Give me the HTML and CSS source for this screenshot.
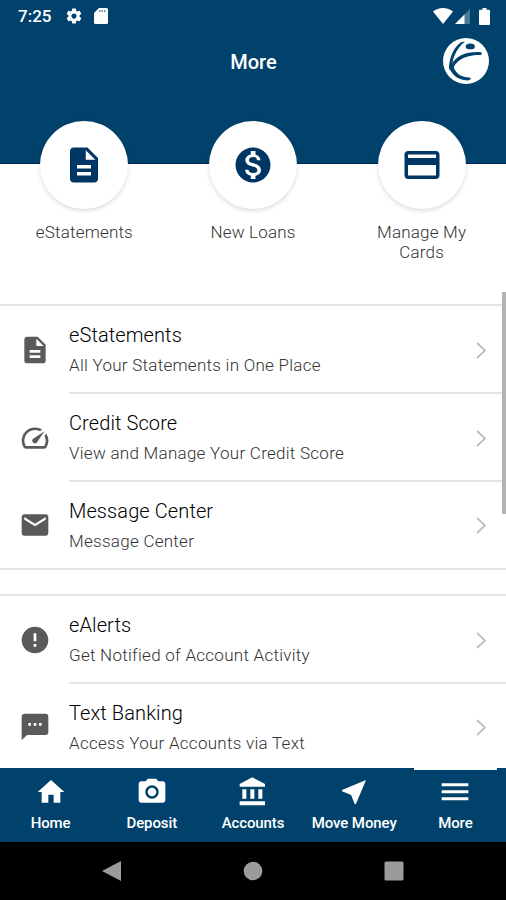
FILE: index.html
```html
<!DOCTYPE html>
<html lang="en">
  <head>
    <meta charset="utf-8">
    <title>More</title>
    <link rel="stylesheet" href="styles.css">
  </head>
  <body>
    <header class="header">
      <div class="status-bar">
        <span class="clock">7:25</span>
        <svg class="status-gear" viewBox="0 0 24 24"><path d="M19.43 12.98c.04-.32.07-.64.07-.98s-.03-.66-.07-.98l2.11-1.65c.19-.15.24-.42.12-.64l-2-3.46c-.12-.22-.39-.3-.61-.22l-2.49 1c-.52-.4-1.08-.73-1.69-.98l-.38-2.65C14.46 2.18 14.25 2 14 2h-4c-.25 0-.46.18-.49.42l-.38 2.65c-.61.25-1.17.59-1.69.98l-2.49-1c-.23-.09-.49 0-.61.22l-2 3.46c-.13.22-.07.49.12.64l2.11 1.65c-.04.32-.07.65-.07.98s.03.66.07.98l-2.11 1.65c-.19.15-.24.42-.12.64l2 3.46c.12.22.39.3.61.22l2.49-1c.52.4 1.08.73 1.69.98l.38 2.65c.03.24.24.42.49.42h4c.25 0 .46-.18.49-.42l.38-2.65c.61-.25 1.17-.59 1.69-.98l2.49 1c.23.09.49 0 .61-.22l2-3.46c.12-.22.07-.49-.12-.64l-2.11-1.65zM12 15.5c-1.93 0-3.5-1.57-3.5-3.5s1.57-3.5 3.5-3.5 3.5 1.57 3.5 3.5-1.57 3.5-3.5 3.5z"/></svg>
        <svg class="status-card" viewBox="0 0 14 16"><path d="M5 0h7.500q1.500 0 1.500 1.500v13q0 1.500-1.500 1.500h-11Q0 16 0 14.500V5z"/><path class="notch" d="M5 2h1.500v2H5zM7.500 2H9v2H7.500zM10 2h1.500v2H10z"/></svg>
        <div class="status-right">
          <svg class="status-wifi" viewBox="0 0 20 16"><path d="M10 16L0 3.500C2.800 1.200 6.200 0 10 0s7.200 1.200 10 3.500z"/></svg>
          <svg class="status-signal" viewBox="0 0 15 15"><path class="dim" d="M15 0v15H0z"/><path d="M9.500 5.500V15H0z"/></svg>
          <svg class="status-battery" viewBox="0 0 11 17"><path d="M3.500 0h4v1.700H10q1 0 1 1V16q0 1-1 1H1q-1 0-1-1V2.700q0-1 1-1h2.500z"/></svg>
        </div>
      </div>
      <div class="title-bar">
        <h1>More</h1>
        <svg class="logo" viewBox="0 0 46 46">
          <circle class="disc" cx="23" cy="23" r="23"/>
          <ellipse class="mark" cx="27.300" cy="8.400" rx="4.600" ry="2.900"/>
          <path class="mark" d="M22 3.500L18.500 4C12 8 6 18 6 31l3.500 3C7.500 23 13 10.500 22 3.500z"/>
          <path class="mark" d="M38.500 14.200C25 13 12 17.500 8.500 27l1.500 7c0-10 11-17.500 28.500-17z"/>
          <path class="mark" d="M6 27c1 8 7 15 19 15.500l3-1.500-1-1.500C17 39.500 11.500 34 10 27z"/>
        </svg>
      </div>
    </header>

    <main class="content">
      <nav class="shortcuts">
        <a class="shortcut">
          <span class="bubble"><svg viewBox="0 0 24 24"><path d="M14 2H6c-1.100 0-1.990.9-1.990 2L4 20c0 1.100.89 2 1.990 2H18c1.100 0 2-.9 2-2V8l-6-6zm2 16H8v-2h8v2zm0-4H8v-2h8v2zm-3-5V3.500L18.500 9H13z"/></svg></span>
          <span class="shortcut-label">eStatements</span>
        </a>
        <a class="shortcut">
          <span class="bubble"><svg viewBox="0 0 24 24"><path d="M12 2C6.480 2 2 6.480 2 12s4.480 10 10 10 10-4.480 10-10S17.520 2 12 2zm1.410 16.090V20h-2.670v-1.930c-1.710-.36-3.160-1.460-3.270-3.400h1.960c.1 1.050.82 1.870 2.650 1.870 1.960 0 2.400-.98 2.400-1.590 0-.83-.44-1.610-2.670-2.140-2.480-.6-4.180-1.620-4.180-3.670 0-1.720 1.390-2.840 3.110-3.210V4h2.670v1.950c1.860.45 2.790 1.860 2.850 3.390H14.300c-.05-1.110-.64-1.870-2.220-1.870-1.500 0-2.400.68-2.400 1.640 0 .84.65 1.390 2.670 1.910s4.180 1.390 4.180 3.910c-.01 1.830-1.380 2.830-3.120 3.160z"/></svg></span>
          <span class="shortcut-label">New Loans</span>
        </a>
        <a class="shortcut">
          <span class="bubble"><svg viewBox="0 0 24 24"><path d="M20 4H4c-1.110 0-1.990.89-1.990 2L2 18c0 1.110.89 2 2 2h16c1.110 0 2-.89 2-2V6c0-1.110-.89-2-2-2zm0 14H4v-6h16v6zm0-10H4V6h16v2z"/></svg></span>
          <span class="shortcut-label">Manage My Cards</span>
        </a>
      </nav>

      <ul class="menu">
        <li class="menu-item">
          <svg class="menu-icon" viewBox="0 0 24 24"><path d="M14 2H6c-1.100 0-1.990.9-1.990 2L4 20c0 1.100.89 2 1.990 2H18c1.100 0 2-.9 2-2V8l-6-6zm2 16H8v-2h8v2zm0-4H8v-2h8v2zm-3-5V3.500L18.500 9H13z"/></svg>
          <div class="menu-text">
            <h2>eStatements</h2>
            <p>All Your Statements in One Place</p>
          </div>
          <svg class="chevron" viewBox="0 0 10 17"><path d="M1 1l8 7.500L1 16"/></svg>
        </li>
        <li class="menu-item">
          <svg class="menu-icon" viewBox="0 0 24 24"><path d="M20.380 8.570l-1.230 1.850a8 8 0 0 1-.22 7.580H5.070A8 8 0 0 1 15.580 6.850l1.850-1.230A10 10 0 0 0 3.350 19a2 2 0 0 0 1.720 1h13.850a2 2 0 0 0 1.740-1 10 10 0 0 0-.27-10.440zm-9.790 6.840a2 2 0 0 0 2.830 0l5.660-8.490-8.490 5.660a2 2 0 0 0 0 2.830z"/></svg>
          <div class="menu-text">
            <h2>Credit Score</h2>
            <p>View and Manage Your Credit Score</p>
          </div>
          <svg class="chevron" viewBox="0 0 10 17"><path d="M1 1l8 7.500L1 16"/></svg>
        </li>
        <li class="menu-item">
          <svg class="menu-icon" viewBox="0 0 24 24"><path d="M20 4H4c-1.100 0-1.990.9-1.990 2L2 18c0 1.100.9 2 2 2h16c1.100 0 2-.9 2-2V6c0-1.100-.9-2-2-2zm0 4l-8 5-8-5V6l8 5 8-5v2z"/></svg>
          <div class="menu-text">
            <h2>Message Center</h2>
            <p>Message Center</p>
          </div>
          <svg class="chevron" viewBox="0 0 10 17"><path d="M1 1l8 7.500L1 16"/></svg>
        </li>
      </ul>

      <ul class="menu">
        <li class="menu-item">
          <svg class="menu-icon" viewBox="0 0 24 24"><path d="M12 2C6.480 2 2 6.480 2 12s4.480 10 10 10 10-4.480 10-10S17.520 2 12 2zm1 15h-2v-2h2v2zm0-4h-2V7h2v6z"/></svg>
          <div class="menu-text">
            <h2>eAlerts</h2>
            <p>Get Notified of Account Activity</p>
          </div>
          <svg class="chevron" viewBox="0 0 10 17"><path d="M1 1l8 7.500L1 16"/></svg>
        </li>
        <li class="menu-item">
          <svg class="menu-icon" viewBox="0 0 24 24"><path d="M20 2H4c-1.100 0-1.990.9-1.990 2L2 22l4-4h14c1.100 0 2-.9 2-2V4c0-1.100-.9-2-2-2zM9 11H7V9h2v2zm4 0h-2V9h2v2zm4 0h-2V9h2v2z"/></svg>
          <div class="menu-text">
            <h2>Text Banking</h2>
            <p>Access Your Accounts via Text</p>
          </div>
          <svg class="chevron" viewBox="0 0 10 17"><path d="M1 1l8 7.500L1 16"/></svg>
        </li>
      </ul>
      <div class="scroll-thumb"></div>
    </main>

    <nav class="tabs">
      <a class="tab">
        <svg viewBox="0 0 24 24"><path d="M10 20v-6h4v6h5v-8h3L12 3 2 12h3v8z"/></svg>
        <span>Home</span>
      </a>
      <a class="tab">
        <svg viewBox="0 0 24 24"><circle cx="12" cy="12" r="3.200"/><path d="M9 2L7.170 4H4c-1.100 0-2 .9-2 2v12c0 1.100.9 2 2 2h16c1.100 0 2-.9 2-2V6c0-1.100-.9-2-2-2h-3.170L15 2H9zm3 15c-2.760 0-5-2.240-5-5s2.240-5 5-5 5 2.240 5 5-2.240 5-5 5z"/></svg>
        <span>Deposit</span>
      </a>
      <a class="tab">
        <svg viewBox="0 0 24 24"><path d="M4 10v7h3v-7H4zm6 0v7h3v-7h-3zM2 22h19v-3H2v3zm14-12v7h3v-7h-3zm-4.500-9L2 6v2h19V6l-9.500-5z"/></svg>
        <span>Accounts</span>
      </a>
      <a class="tab">
        <svg viewBox="0 0 24 24"><path d="M21 3L3 10.530v.98l6.840 2.650L12.480 21h.98L21 3z"/></svg>
        <span>Move Money</span>
      </a>
      <a class="tab active">
        <svg viewBox="0 0 24 24"><path d="M2 5.500h20v2.200H2zM2 10.700h20v2.200H2zM2 16h20v2.200H2z"/></svg>
        <span>More</span>
      </a>
    </nav>

    <div class="system-nav">
      <svg viewBox="0 0 20 20"><path d="M19 0v20L0 10z"/></svg>
      <svg viewBox="0 0 20 20"><circle cx="10" cy="10" r="9.300"/></svg>
      <svg viewBox="0 0 20 20"><rect x=".5" y=".5" width="19" height="19" rx="1.500"/></svg>
    </div>
  </body>
</html>
```
FILE: styles.css
```css
* {
  margin: 0;
  padding: 0;
  box-sizing: border-box;
}

body {
  font-family: Roboto, sans-serif;
  height: 900px;
  display: flex;
  flex-direction: column;
  overflow: hidden;
  background: #fff;
}

svg {
  display: block;
  flex-shrink: 0;
}

/* header */
.header {
  height: 164px;
  flex-shrink: 0;
  background: #00426b;
  border-bottom: 1px solid #002358;
  color: #fff;
  fill: #fff;
}

.status-bar {
  height: 32px;
  padding: 0 16px 0 18px;
  display: flex;
  align-items: center;
}

.clock {
  width: 47px;
  font-size: 17px;
  font-weight: 500;
}

.status-gear {
  width: 18px;
  height: 18px;
}

.status-card {
  width: 14px;
  height: 16px;
  margin-left: 11px;
}

.notch {
  fill: #6f93ad;
}

.status-right {
  margin-left: auto;
  display: flex;
  align-items: center;
}

.status-wifi {
  width: 20px;
  height: 16px;
}

.status-signal {
  width: 15px;
  height: 15px;
  margin-left: 2px;
}

.dim {
  fill: #487b98;
}

.status-battery {
  width: 11px;
  height: 17px;
  margin-left: 9px;
}

.title-bar {
  height: 58px;
  padding: 0 17px 0 18px;
  display: grid;
  grid-template-columns: 46px 1fr 46px;
  align-items: center;
}

.title-bar h1 {
  grid-column: 2;
  padding-top: 1px;
  text-align: center;
  font-size: 20px;
  font-weight: 500;
}

.logo {
  width: 46px;
  height: 46px;
}

.logo .mark {
  fill: #00426b;
}

/* content */
.content {
  position: relative;
  height: 604px;
  flex-shrink: 0;
}

.shortcuts {
  display: grid;
  grid-template-columns: repeat(3, 1fr);
  height: 183px;
  margin-top: -43px;
}

.shortcut {
  display: flex;
  flex-direction: column;
  align-items: center;
}

.bubble {
  width: 88px;
  height: 88px;
  border-radius: 50%;
  background: #fff;
  box-shadow: 0 2px 4px rgba(0, 0, 0, 0.14);
  display: flex;
  align-items: center;
  justify-content: center;
}

.bubble svg {
  width: 42px;
  height: 42px;
  fill: #003663;
}

.shortcut-label {
  width: 110px;
  margin-top: 13px;
  text-align: center;
  font-size: 17px;
  font-weight: 300;
  line-height: 20px;
  letter-spacing: 0.2px;
  color: #333;
}

.menu {
  list-style: none;
  border-top: 2px solid #e4e4e4;
  border-bottom: 2px solid #e4e4e4;
  margin-bottom: 24px;
}

.menu-item {
  height: 88px;
  padding-left: 19px;
  display: flex;
  align-items: center;
  position: relative;
}

.menu-item:last-child {
  height: 86px;
}

.menu-icon {
  width: 32px;
  height: 32px;
  fill: #5a5a5a;
}

.menu-text {
  flex: 1;
  height: 100%;
  margin-left: 18px;
  padding-top: 17px;
  border-bottom: 2px solid #e4e4e4;
}

.menu-item:last-child .menu-text {
  border-bottom: none;
}

.menu-text h2 {
  font-size: 20px;
  font-weight: 300;
  line-height: 24px;
  letter-spacing: 0.1px;
  color: #000;
}

.menu-text p {
  margin-top: 8px;
  font-size: 17px;
  font-weight: 300;
  line-height: 20px;
  letter-spacing: 0.27px;
  color: #333;
}

.chevron {
  position: absolute;
  right: 20px;
  width: 10px;
  height: 17px;
  fill: none;
  stroke: #bdbdbd;
  stroke-width: 1.8;
}

.scroll-thumb {
  position: absolute;
  top: 128px;
  right: 0;
  width: 4px;
  height: 222px;
  background: #b3b3b3;
}

/* bottom tabs */
.tabs {
  height: 74px;
  flex-shrink: 0;
  display: grid;
  grid-template-columns: repeat(5, 1fr);
  background: #00426b;
  position: relative;
  color: #fff;
  fill: #fff;
}

.tab {
  display: flex;
  flex-direction: column;
  align-items: center;
  padding-top: 8px;
  font-size: 15px;
  font-weight: 500;
  line-height: 18px;
  letter-spacing: -0.1px;
  white-space: nowrap;
}

.tab svg {
  width: 32px;
  height: 32px;
  margin-bottom: 6px;
}

.tab.active {
  margin: 0 9px;
  padding-top: 6px;
  border-top: 2px solid #fff;
}

.system-nav {
  height: 58px;
  flex-shrink: 0;
  background: #000;
  fill: #9b9b9b;
  display: flex;
  align-items: center;
  justify-content: center;
  gap: 121px;
}

.system-nav svg {
  width: 20px;
  height: 20px;
}
```
